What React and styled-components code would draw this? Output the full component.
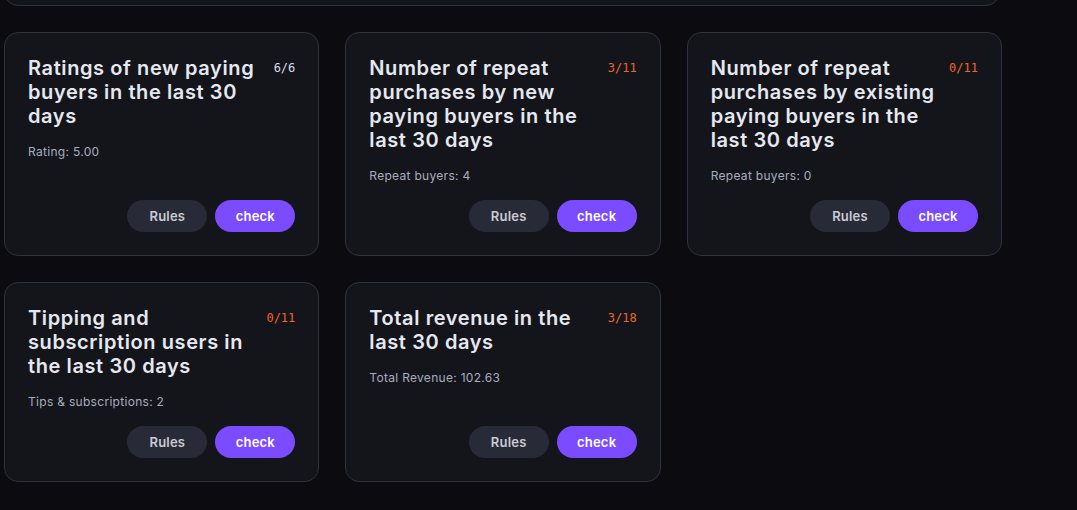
import React from 'react';
import styled, { createGlobalStyle } from 'styled-components';

const GlobalStyle = createGlobalStyle`
  html, body {
    margin: 0;
    padding: 0;
    background: #0b0b10;
    overflow: hidden;
  }
  body {
    font-family: Inter, "Open Sans", sans-serif;
    color: #e4e6ee;
  }
`;

const Page = styled.main`
  width: 998px;
  padding: 0 0 0 4px;
  margin-top: -72px;
  display: flex;
  flex-direction: column;
  gap: 26px;
`;

const SummaryCard = styled.section`
  height: 78px;
  width: 996px;
  box-sizing: border-box;
  background: #14151b;
  border: 1px solid #30313f;
  border-radius: 14px;
`;

const Grid = styled.div`
  display: grid;
  grid-template-columns: repeat(3, 1fr);
  gap: 26px;
`;

const Card = styled.article`
  background: #14151b;
  border: 1px solid #30313f;
  border-radius: 14px;
  padding: 23px;
  display: flex;
  flex-direction: column;
  min-height: 152px;
`;

const Head = styled.div`
  display: flex;
  justify-content: space-between;
  align-items: flex-start;
  gap: 12px;
`;

const Title = styled.h3`
  margin: 0;
  max-width: 234px;
  font-size: 20px;
  line-height: 24px;
  font-weight: 600;
  color: #e6e8f0;
  letter-spacing: 0.6px;
`;

const Score = styled.span`
  font-family: "DejaVu Sans Mono", "Liberation Mono", monospace;
  font-size: 12px;
  line-height: 24px;
  white-space: nowrap;
  color: ${(p) => (p.$done ? '#d6def0' : '#f0642a')};
`;

const Stat = styled.p`
  margin: 15px 0 15px;
  font-size: 12px;
  line-height: 18px;
  letter-spacing: 0.3px;
  color: #a8acbf;
`;

const Actions = styled.div`
  margin-top: auto;
  display: flex;
  justify-content: flex-end;
  gap: 8px;
`;

const Button = styled.button`
  width: 80px;
  height: 32px;
  border: none;
  border-radius: 16px;
  font-family: inherit;
  font-size: 13px;
  font-weight: 600;
  letter-spacing: 0.2px;
  cursor: pointer;
  background: ${(p) => (p.$primary ? '#7a4bff' : '#292a38')};
  color: ${(p) => (p.$primary ? '#ffffff' : '#c9cad3')};
`;

const tasks = [
  { title: 'Ratings of new paying buyers in the last 30 days', score: '6/6', done: true, stat: 'Rating: 5.00' },
  { title: 'Number of repeat purchases by new paying buyers in the last 30 days', score: '3/11', stat: 'Repeat buyers: 4' },
  { title: 'Number of repeat purchases by existing paying buyers in the last 30 days', score: '0/11', stat: 'Repeat buyers: 0' },
  { title: 'Tipping and subscription users in the last 30 days', score: '0/11', stat: 'Tips & subscriptions: 2' },
  { title: 'Total revenue in the last 30 days', score: '3/18', stat: 'Total Revenue: 102.63' },
];

const App = () => (
  <>
    <GlobalStyle />
    <Page>
      <SummaryCard />
      <Grid>
        {tasks.map((t) => (
          <Card key={t.title}>
            <Head>
              <Title>{t.title}</Title>
              <Score $done={t.done}>{t.score}</Score>
            </Head>
            <Stat>{t.stat}</Stat>
            <Actions>
              <Button>Rules</Button>
              <Button $primary>check</Button>
            </Actions>
          </Card>
        ))}
      </Grid>
    </Page>
  </>
);

export default App;
